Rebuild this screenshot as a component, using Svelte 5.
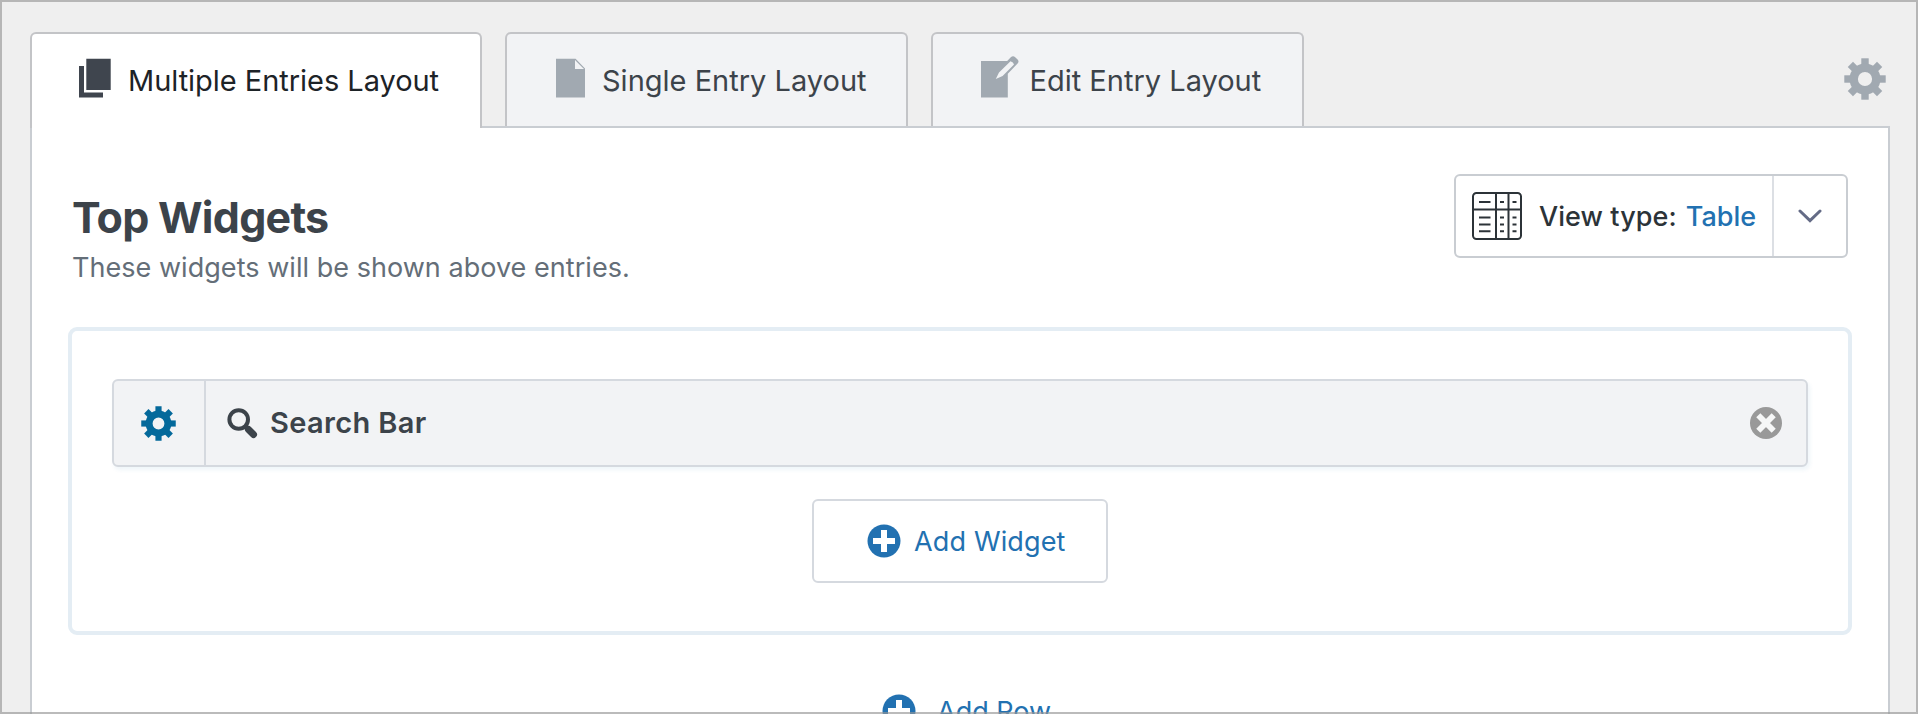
<script lang="ts">
  type Tab = { id: string; label: string };

  const tabs: Tab[] = [
    { id: "multiple", label: "Multiple Entries Layout" },
    { id: "single", label: "Single Entry Layout" },
    { id: "edit", label: "Edit Entry Layout" },
  ];

  let active = $state("multiple");
</script>

{#snippet gear(size: number)}
  <svg width={size} height={size} viewBox="-21 -21 42 42" aria-hidden="true">
    {#each [0, 45, 90, 135] as angle}
      <rect
        x="-3.7"
        y="-20.7"
        width="7.4"
        height="41.4"
        transform="rotate({angle})"
        mask="url(#gear-hole)"
      />
    {/each}
    <mask id="gear-hole" maskUnits="userSpaceOnUse" x="-22" y="-22" width="44" height="44">
      <rect x="-22" y="-22" width="44" height="44" fill="#fff" />
      <circle r="10" fill="#000" />
    </mask>
    <circle r="11.3" fill="none" stroke="currentColor" stroke-width="8.4" />
  </svg>
{/snippet}

{#snippet plus()}
  <svg class="plus" width="34" height="34" viewBox="0 0 34 34" aria-hidden="true">
    <circle cx="17" cy="17" r="16.5" />
    <path d="M14 6h6v8h8v6h-8v8h-6v-8H6v-6h8z" fill="#fff" />
  </svg>
{/snippet}

<div class="page">
  <nav class="tabs">
    {#each tabs as tab}
      <button
        type="button"
        class="tab {tab.id} {active === tab.id ? 'active' : ''}"
        onclick={() => (active = tab.id)}
      >
        {#if tab.id === "multiple"}
          <svg width="32" height="42" viewBox="0 0 32 42">
            <path d="M7.3 2.8h24.4V34H7.3zM0 10h5v26.5h19v5H0z" />
          </svg>
        {:else if tab.id === "single"}
          <svg width="30" height="42" viewBox="0 0 30 42">
            <path fill-rule="evenodd" d="M0 2.8h19.6L29 12.4v29.1H0zM19 4v9h9z" />
          </svg>
        {:else}
          <svg width="38" height="42" viewBox="0 0 38 42">
            <path
              fill-rule="evenodd"
              d="M0 5h26.2l3.6-3.8q2.3-2 4.4 0l2.4 2.4q1.8 1.9 0 4L26.8 17.7v23.8H0zM29.5 5.2 18 16.4 14.8 23l6.8-3L33 8.6q-.5-2.6-3.5-3.4z"
            />
          </svg>
        {/if}
        <span>{tab.label}</span>
      </button>
    {/each}
    <button type="button" class="settings" aria-label="Settings">{@render gear(42)}</button>
  </nav>

  <main class="panel">
    <header>
      <div>
        <h1>Top Widgets</h1>
        <p>These widgets will be shown above entries.</p>
      </div>
      <div class="view-type">
        <div class="current">
          <svg width="50" height="48" viewBox="0 0 50 48" fill="none" stroke="#2c3338" stroke-width="2">
            <rect x="1" y="1" width="48" height="46" rx="3.5" />
            <path d="M1 17.5h48M24 1v46M36.5 1v46" />
            <path d="M7 10h11.5M28 10h4M40.5 10h4M7 25.5h11.5M7 32.5h11.5M7 39.3h11.5M28 25.5h4M28 32.5h4M28 39.3h4M40.5 25.5h4M40.5 32.5h4M40.5 39.3h4" />
          </svg>
          <span class="label">View type:</span>
          <span class="value">Table</span>
        </div>
        <button type="button" class="toggle" aria-label="Change view type">
          <svg width="24" height="14" viewBox="0 0 24 14">
            <path d="M2 2l10 9.6L22 2" fill="none" stroke="#646b86" stroke-width="3" stroke-linecap="round" />
          </svg>
        </button>
      </div>
    </header>

    <section class="zone">
      <div class="widget">
        <button type="button" class="configure" aria-label="Configure widget">{@render gear(35)}</button>
        <div class="name">
          <svg width="31" height="31" viewBox="0 0 31 31" fill="none" stroke="#3c434a">
            <circle cx="11.7" cy="11.5" r="9.3" stroke-width="4" />
            <path d="M17.5 17.5l4 4" stroke-width="5" />
            <path d="M21.5 21.5l5 5" stroke-width="7" stroke-linecap="round" />
          </svg>
          <span>Search Bar</span>
        </div>
        <button type="button" class="remove" aria-label="Remove widget">
          <svg width="32" height="32" viewBox="0 0 32 32">
            <circle cx="16" cy="16" r="16" fill="#999" />
            <path d="M8.3 8.3l15.4 15.4M23.7 8.3L8.3 23.7" stroke="#f6f7f7" stroke-width="5.8" />
          </svg>
        </button>
      </div>
      <button type="button" class="add">{@render plus()}<span>Add Widget</span></button>
    </section>

    <button type="button" class="add-row">{@render plus()}<span>Add Row</span></button>
  </main>
</div>

<style>
  :global(body) {
    margin: 0;
    overflow: hidden;
  }
  .page {
    position: relative;
    box-sizing: border-box;
    height: 714px;
    padding: 32px 28px 0 30px;
    overflow: hidden;
    background: #efefef;
    font-family: Inter, "Liberation Sans", sans-serif;
    font-size: 29px;
    color: #3c434a;
  }
  /* Frame lies over the clipped content */
  .page::after {
    content: "";
    position: absolute;
    inset: 0;
    border: 2px solid rgba(150, 150, 150, 0.65);
    pointer-events: none;
  }
  button {
    box-sizing: border-box;
    display: flex;
    align-items: center;
    padding: 0;
    border: 0;
    background: none;
    color: inherit;
    font: inherit;
    white-space: nowrap;
    cursor: pointer;
  }
  svg {
    display: block;
    flex: none;
    fill: currentColor;
  }
  .tabs {
    display: flex;
    gap: 23px;
    height: 94px;
  }
  .tab {
    height: 94px;
    padding: 2px 0 0 49px;
    border: 2px solid #c3c4c7;
    border-bottom: 0;
    border-radius: 6px 6px 0 0;
    background: #f2f3f5;
  }
  .tab svg {
    margin-top: -8px;
    color: #a1a9b1;
  }
  .tab span {
    margin-top: -2px;
  }
  .tab.multiple {
    width: 452px;
    padding-left: 47px;
    letter-spacing: -0.04px;
  }
  .tab.multiple span {
    margin-left: 17px;
  }
  .tab.single {
    width: 403px;
  }
  .tab.single span {
    margin-left: 16px;
  }
  .tab.edit {
    width: 373px;
    padding-left: 47.5px;
  }
  .tab.edit span {
    margin-left: 11px;
  }
  .tab.active {
    z-index: 1;
    height: 96px;
    padding-bottom: 2px;
    background: #fff;
    color: #1d2327;
  }
  .tab.active svg {
    color: #3f454e;
  }
  .settings {
    margin: 0 4px 0 auto;
    color: #a1a9b1;
  }
  .panel {
    box-sizing: border-box;
    height: 700px;
    padding: 46px 36px 0;
    border: 2px solid #c9cdd2;
    background: #fff;
  }
  header {
    display: flex;
    justify-content: space-between;
    height: 153px;
    padding: 0 4px 0 4px;
  }
  h1 {
    margin: 17px 0 0;
    font-size: 43px;
    font-weight: 700;
    line-height: 52px;
    letter-spacing: -0.75px;
  }
  p {
    margin: 8px 0 0;
    font-size: 27px;
    line-height: 34px;
    letter-spacing: 0.04px;
    color: #646e78;
  }
  .view-type {
    box-sizing: border-box;
    display: flex;
    width: 394px;
    height: 84px;
    border: 2px solid #c9cdd2;
    border-radius: 6px;
    font-size: 27px;
    font-weight: 500;
  }
  .current {
    display: flex;
    flex: 1;
    align-items: center;
    padding-left: 16px;
    color: #2c3338;
  }
  .current svg {
    fill: none;
  }
  .label {
    margin-left: 17px;
    letter-spacing: 0.08px;
  }
  .value {
    margin-left: 9px;
    color: #2271b1;
  }
  .toggle {
    justify-content: center;
    width: 74px;
    border-left: 2px solid #dcdfe4;
  }
  .zone {
    box-sizing: border-box;
    display: flex;
    flex-direction: column;
    align-items: center;
    height: 308px;
    padding: 48px 40px 0;
    border: 4px solid #e4edf4;
    border-radius: 9px;
  }
  .widget {
    box-sizing: border-box;
    display: flex;
    width: 100%;
    height: 88px;
    border: 2px solid #d5d9df;
    border-radius: 6px;
    background: #f2f3f5;
    box-shadow: 2px 3px 4px rgba(34, 113, 177, 0.07);
  }
  .configure {
    justify-content: center;
    width: 92px;
    padding: 1px 1px 0 0;
    border-right: 2px solid #d5d9df;
    color: #04699b;
  }
  .name {
    display: flex;
    flex: 1;
    align-items: center;
    padding-left: 21px;
    font-weight: 600;
    letter-spacing: 0.35px;
  }
  .name svg {
    fill: none;
  }
  .name span {
    margin: -2px 0 0 12px;
  }
  .remove {
    margin-right: 24px;
  }
  .add {
    width: 296px;
    height: 84px;
    margin-top: 32px;
    padding-left: 53px;
    border: 2px solid #d5d9df;
    border-radius: 6px;
    color: #2271b1;
    font-size: 27px;
    letter-spacing: 0.15px;
  }
  .add span {
    margin-left: 13px;
  }
  .add-row {
    margin: 59px 0 0 814px;
    color: #2271b1;
    font-size: 27px;
  }
  .add-row span {
    margin-left: 21px;
  }
</style>
